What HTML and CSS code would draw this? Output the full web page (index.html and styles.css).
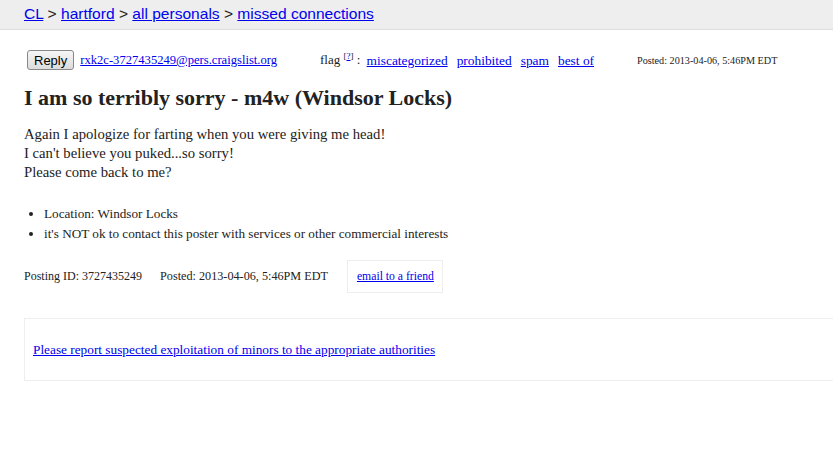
FILE: index.html
```html
<!DOCTYPE html>
<html>
<head>
<meta charset="utf-8">
<link rel="stylesheet" href="styles.css">
</head>
<body>
<header class="bchead">
  <a href="#">CL</a> &gt; <a href="#">hartford</a> &gt; <a href="#">all personals</a> &gt; <a href="#">missed connections</a>
</header>
<main class="page">
  <div class="topbar">
    <span class="actions">
      <button class="reply">Reply</button>
      <a class="mail" href="#">rxk2c-3727435249@pers.craigslist.org</a>
    </span>
    <span class="flags">flag <sup>[<a href="#">?</a>]</sup> : <a href="#">miscategorized</a><a href="#">prohibited</a><a href="#">spam</a><a href="#">best of</a></span>
    <span class="postdate">Posted: 2013-04-06, 5:46PM EDT</span>
  </div>
  <h2 class="title">I am so terribly sorry - m4w (Windsor Locks)</h2>
  <div class="body">
    Again I apologize for farting when you were giving me head!<br>
    I can't believe you puked...so sorry!<br>
    Please come back to me?
  </div>
  <ul class="notices">
    <li>Location: Windsor Locks</li>
    <li>it's NOT ok to contact this poster with services or other commercial interests</li>
  </ul>
  <div class="postinginfo">
    <span class="pid">Posting ID: 3727435249</span>
    <span class="pdate">Posted: 2013-04-06, 5:46PM EDT</span>
    <span class="friend"><a href="#">email to a friend</a></span>
  </div>
  <div class="report">
    <a href="#">Please report suspected exploitation of minors to the appropriate authorities</a>
  </div>
</main>
</body>
</html>
```
FILE: styles.css
```css
html, body {
  margin: 0;
  padding: 0;
  background: #fff;
  color: #222;
  font-family: "Liberation Serif", "Times New Roman", serif;
}
a { color: #00e; }
.bchead {
  background: #eee;
  border-bottom: 1px solid #ddd;
  height: 30px;
  box-sizing: border-box;
  padding: 4px 0 0 24px;
  font-family: "Liberation Sans", Arial, sans-serif;
  font-size: 15.55px;
  line-height: 20px;
  color: #222;
}
.page {
  padding: 0 0 0 24px;
}
.topbar {
  display: flex;
  align-items: center;
  margin-top: 20px;
  height: 20px;
  font-size: 13px;
}
.actions {
  display: flex;
  align-items: center;
  width: 293px;
  padding-left: 3px;
  gap: 6px;
}
.mail { font-size: 12.6px; }
.reply {
  font-family: "Liberation Sans", Arial, sans-serif;
  font-size: 13px;
  height: 20px;
  padding: 0 6px;
  border: 1px solid #888;
  border-radius: 3px;
  background: linear-gradient(#f6f6f6, #dcdcdc);
  color: #000;
}
.flags {
  width: 317px;
}
.flags sup { font-size: 9px; }
.flags > a { font-size: 13.4px; }
.flags sup a { font-size: 9px; }
.flags > a:first-of-type { margin-left: 3px; }
.flags > a + a { margin-left: 9px; }
.postdate {
  font-size: 10.2px;
}
.title {
  font-size: 22px;
  font-weight: bold;
  margin: 16px 0 0 0;
  line-height: 24px;
}
.body {
  font-size: 14.7px;
  line-height: 19px;
  margin-top: 15px;
}
.notices {
  margin: 22px 0 0 0;
  padding-left: 20px;
  font-size: 13.2px;
  line-height: 20px;
}
.postinginfo {
  display: flex;
  align-items: center;
  font-size: 12px;
  margin-top: 16px;
}
.pid { margin-right: 18px; }
.pdate { margin-right: 19px; font-size: 12.2px; }
.friend {
  border: 1px solid #eee;
  padding: 9px 8px 9px 9px;
  line-height: 13px;
  font-size: 11.7px;
}
.report {
  margin-top: 25px;
  border: 1px solid #eee;
  border-right: none;
  height: 63px;
  box-sizing: border-box;
  display: flex;
  align-items: center;
  padding: 0 8px;
  font-size: 13.3px;
}
```
